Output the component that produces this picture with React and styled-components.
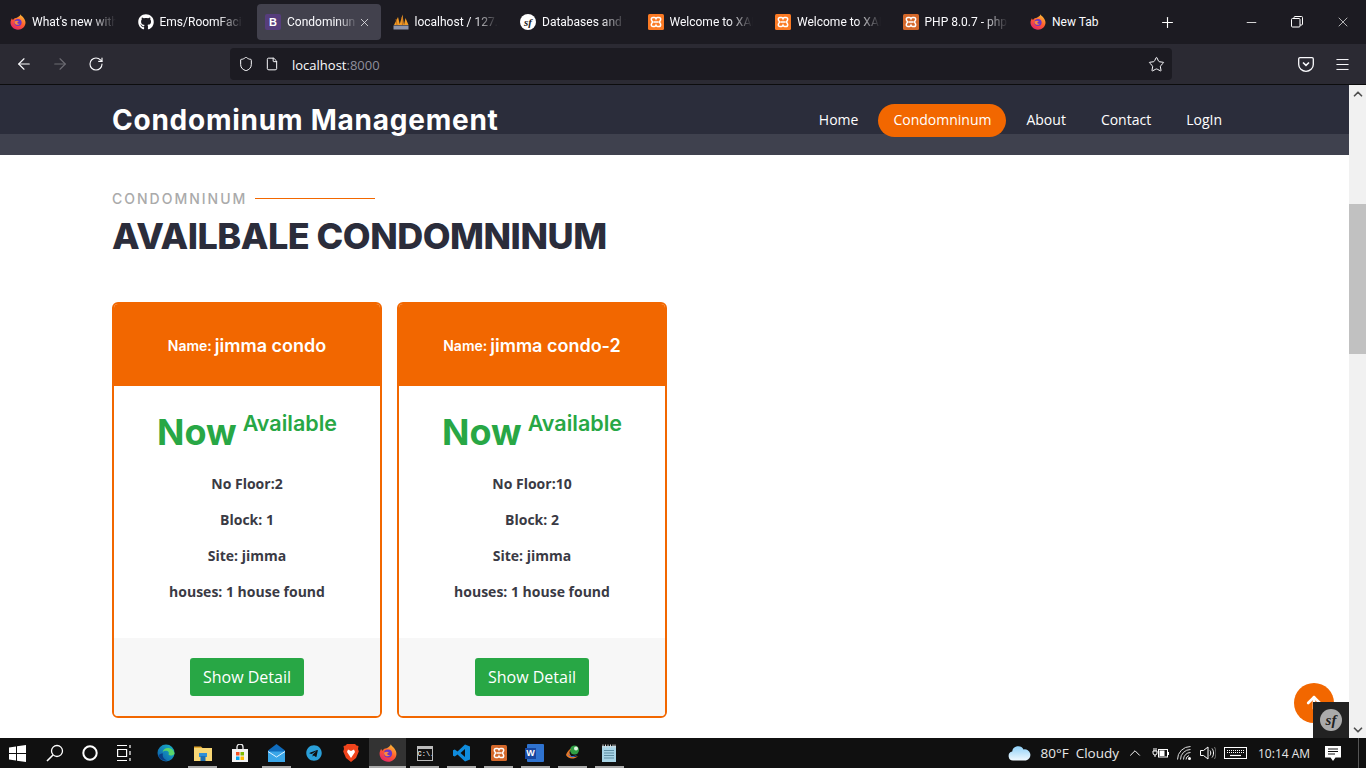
import React from "react";
import styled, { createGlobalStyle } from "styled-components";
import { ArrowLeft, ArrowRight, RotateCw, Shield, File, Star, Menu, Plus, Minus, X, ChevronUp, ChevronDown, ArrowUp } from "lucide-react";
import { FaGithub, FaTelegram } from "react-icons/fa";

const GlobalStyle = createGlobalStyle`
  html, body { margin: 0; padding: 0; height: 100%; overflow: hidden; background: #fff; }
  * { box-sizing: border-box; }
  body { font-family: "Open Sans", sans-serif; }
`;

const Screen = styled.div`
  width: 1366px;
  height: 768px;
  display: flex;
  flex-direction: column;
  overflow: hidden;
`;

const TabStrip = styled.div`
  height: 44px;
  display: flex;
  align-items: center;
  background: #1c1b22;
`;

const Tab = styled.div`
  width: 127.5px;
  height: 36px;
  padding: 0 2px;
`;

const TabInner = styled.div`
  height: 100%;
  display: flex;
  align-items: center;
  padding: 0 10px 0 8px;
  border-radius: 4px;
  background: ${(p) => (p.$active ? "#42414d" : "transparent")};
`;

const TabIcon = styled.span`
  width: 16px;
  height: 16px;
  flex: none;
  display: flex;
  margin-right: 6px;
`;

const TabLabel = styled.span`
  flex: 1;
  min-width: 0;
  overflow: hidden;
  white-space: nowrap;
  font-family: "Roboto", sans-serif;
  font-size: 12px;
  color: #fbfbfe;
  ${(p) => !p.$plain && "mask-image: linear-gradient(to right, #000 70%, transparent 100%);"}
`;

const BootstrapMark = styled.span`
  width: 16px;
  height: 16px;
  border-radius: 2px;
  background: #563d7c;
  color: #fff;
  font: 700 11px/16px "Liberation Sans", sans-serif;
  text-align: center;
`;

const SfBadge = styled.span`
  width: ${(p) => p.$size}px;
  height: ${(p) => p.$size}px;
  border-radius: 50%;
  background: ${(p) => p.$bg};
  color: ${(p) => p.$fg};
  font: italic 700 ${(p) => Math.round(p.$size * 0.68)}px/${(p) => p.$size}px "Liberation Serif", serif;
  text-align: center;
  display: block;
`;

const NewTabButton = styled.div`
  width: 40px;
  display: flex;
  justify-content: center;
`;

const Spacer = styled.div`
  flex: 1;
`;

const WinButton = styled.div`
  width: 46px;
  display: flex;
  justify-content: center;
`;

const Toolbar = styled.div`
  height: 41px;
  padding: 4px 6px 4px;
  display: flex;
  align-items: center;
  background: #2b2a33;
  border-bottom: 1px solid #0c0c0d;
`;

const ToolButton = styled.div`
  width: 36px;
  display: flex;
  justify-content: center;
  margin-left: ${(p) => (p.$first ? "116px" : "0")};
`;

const UrlBar = styled.div`
  width: 942px;
  height: 32px;
  margin-left: 116px;
  padding: 0 7px 0 8px;
  display: flex;
  align-items: center;
  border-radius: 4px;
  background: #1c1b22;
`;

const UrlIcon = styled.span`
  width: 27px;
  flex: none;
  display: flex;
`;

const UrlText = styled.div`
  flex: 1;
  padding-top: 1px;
  font-size: 13px;
  color: #fbfbfe;
`;

const UrlPort = styled.span`
  color: #8f8f9d;
`;

const Viewport = styled.div`
  position: relative;
  flex: 1;
  min-height: 0;
  display: flex;
  overflow: hidden;
`;

const Page = styled.div`
  flex: 1;
  min-width: 0;
  background: #fff;
`;

const Header = styled.header`
  height: 70px;
  padding: 19px 109.5px 0 112px;
  display: flex;
  justify-content: space-between;
  align-items: flex-start;
  background: linear-gradient(#2b2d3b 49px, #3f414e 49px);
`;

const Brand = styled.div`
  font-family: "Inter", sans-serif;
  font-weight: 700;
  font-size: 28px;
  letter-spacing: 0.76px;
  line-height: 32px;
  color: #fff;
`;

const Nav = styled.nav`
  display: flex;
  align-items: center;
`;

const NavLink = styled.a`
  height: 33px;
  padding: 0 ${(p) => (p.$active ? "15px" : "17.5px")} 2px;
  margin: 0 ${(p) => (p.$active ? "2.5px" : "0")};
  display: flex;
  align-items: center;
  border-radius: 17px;
  font-size: 14px;
  color: #fff;
  background: ${(p) => (p.$active ? "#f26700" : "transparent")};
`;

const Section = styled.section`
  padding: 33px 0 0 112px;
`;

const Eyebrow = styled.div`
  height: 20px;
  display: flex;
  align-items: center;
  gap: 8px;
`;

const EyebrowText = styled.span`
  font-family: "Inter", sans-serif;
  font-weight: 500;
  font-size: 14px;
  letter-spacing: 2px;
  color: #aaa;
`;

const EyebrowLine = styled.span`
  width: 120px;
  height: 1px;
  background: #f26700;
`;

const Heading = styled.h1`
  margin: 5px 0 0;
  font-family: "Inter", sans-serif;
  font-weight: 800;
  font-size: 36px;
  letter-spacing: -0.5px;
  line-height: 46px;
  color: #2b2d3b;
`;

const CardRow = styled.div`
  margin-top: 43px;
  display: flex;
  gap: 15px;
`;

const Card = styled.article`
  width: 270px;
  height: 416px;
  display: flex;
  flex-direction: column;
  border: 2px solid #f26700;
  border-radius: 6px;
  overflow: hidden;
  background: #fff;
`;

const CardHead = styled.div`
  height: 82px;
  flex: none;
  display: flex;
  align-items: center;
  justify-content: center;
  gap: 3px;
  background: #f26700;
  color: #fff;
`;

const NameLabel = styled.span`
  font-family: "Inter", sans-serif;
  font-weight: 600;
  font-size: 14px;
`;

const NameValue = styled.span`
  font-family: "Inter", sans-serif;
  font-weight: 600;
  font-size: 18px;
`;

const CardBody = styled.div`
  flex: 1;
  padding-top: 22px;
  display: flex;
  flex-direction: column;
  align-items: center;
`;

const Status = styled.div`
  display: flex;
  gap: 6px;
  color: #28a745;
  font-family: "Inter", sans-serif;
  font-weight: 700;
`;

const StatusNow = styled.span`
  font-size: 36px;
  line-height: 48px;
`;

const StatusWord = styled.span`
  font-size: 21.5px;
  font-weight: 600;
  line-height: 30px;
`;

const Facts = styled.div`
  margin-top: 18px;
  display: grid;
  row-gap: 16px;
  justify-items: center;
`;

const Fact = styled.p`
  margin: 0;
  font-size: 14px;
  line-height: 20px;
  font-weight: 700;
  color: #3a3a44;
`;

const CardFoot = styled.div`
  height: 78px;
  flex: none;
  padding-top: 20px;
  display: flex;
  justify-content: center;
  background: #f7f7f7;
`;

const DetailButton = styled.button`
  width: 114px;
  height: 38px;
  padding: 0;
  border: 0;
  border-radius: 3px;
  background: #28a745;
  color: #fff;
  font: 400 16px "Open Sans", sans-serif;
`;

const Scrollbar = styled.div`
  width: 17px;
  flex: none;
  display: flex;
  flex-direction: column;
  background: #f1f1f1;
`;

const ScrollArrow = styled.div`
  height: 17px;
  display: flex;
  align-items: center;
  justify-content: center;
`;

const ScrollTrack = styled.div`
  flex: 1;
  padding-top: 102px;
`;

const ScrollThumb = styled.div`
  height: 150px;
  background: #c1c1c1;
`;

const BackToTop = styled.div`
  position: absolute;
  left: 1294px;
  top: 598px;
  width: 40px;
  height: 40px;
  border-radius: 50%;
  display: flex;
  align-items: center;
  justify-content: center;
  background: #f26700;
`;

const DebugBar = styled.div`
  position: absolute;
  left: 1313px;
  bottom: 0;
  width: 36px;
  height: 36px;
  display: flex;
  align-items: center;
  justify-content: center;
  background: #222;
`;

const Taskbar = styled.footer`
  height: 30px;
  display: flex;
  align-items: stretch;
  background: #101010;
`;

const StartSlot = styled.div`
  width: 37px;
  padding-right: 3px;
  display: flex;
  align-items: center;
  justify-content: center;
`;

const SystemSlot = styled.div`
  width: 35px;
  display: flex;
  align-items: center;
  justify-content: center;
`;

const DockGap = styled.div`
  width: 5px;
`;

const DockSlot = styled.div`
  position: relative;
  width: 37px;
  display: flex;
  align-items: center;
  justify-content: center;
  background: ${(p) => (p.$active ? "#333" : "transparent")};
  ${(p) =>
    p.$running &&
    `&::after {
      content: "";
      position: absolute;
      left: ${p.$active ? 0 : 4}px;
      right: ${p.$active ? 0 : 4}px;
      bottom: 0;
      height: 2px;
      background: #aaa;
    }`}
`;

const CmdBox = styled.span`
  width: 16px;
  height: 15px;
  border: 1px solid #bbb;
  border-top-width: 3px;
  background: #111;
  color: #ddd;
  font: 700 7px/10px "Liberation Mono", monospace;
  text-align: left;
  overflow: hidden;
`;

const WordFrame = styled.span`
  position: relative;
  width: 17px;
  height: 18px;
  background: #2f73d0;
  border-radius: 1px;
`;

const WordBadge = styled.span`
  position: absolute;
  left: -2px;
  top: 4px;
  width: 11px;
  height: 11px;
  background: #17469e;
  color: #fff;
  font: 700 9px/11px "Liberation Sans", sans-serif;
  text-align: center;
`;

const Weather = styled.div`
  display: flex;
  align-items: center;
`;

const TrayText = styled.span`
  margin-left: ${(p) => p.$left}px;
  font: 400 13.5px "Open Sans", sans-serif;
  color: #e8e8e8;
`;

const TrayIcons = styled.div`
  margin-left: 7px;
  display: flex;
  align-items: center;
  gap: 8px;
`;

const Clock = styled.div`
  width: 58px;
  margin-left: 11px;
  display: flex;
  align-items: center;
  font-size: 12px;
  color: #e8e8e8;
`;

const Notification = styled.div`
  width: 34px;
  display: flex;
  align-items: center;
  justify-content: center;
`;

const ShowDesktop = styled.div`
  width: 8px;
  border-left: 1px solid #555;
  margin-left: 8px;
`;

const Firefox = ({ id, size = 16 }) => (
  <svg width={size} height={size} viewBox="0 0 16 16">
    <defs>
      <linearGradient id={id} x1="0.8" y1="0" x2="0.2" y2="1">
        <stop offset="0" stopColor="#ffc436" />
        <stop offset="0.5" stopColor="#ff5b2e" />
        <stop offset="1" stopColor="#e3206e" />
      </linearGradient>
    </defs>
    <path d="M10.5 0.3c.3 1.5 2 2 3.2 3.7 1.2 1.7 1.9 3.4 1.8 5-.2 3.7-3.4 6.7-7.5 6.7C3.8 15.7.5 12.5.5 8.6.5 6.8 1.3 5.2 2 4.2c.2 1 .6 1.4 1 1.8.8-1.5 2.6-2.2 3.8-2.2C8.4 2.9 10.3 2 10.5.3z" fill={`url(#${id})`} />
    <circle cx="8" cy="8.5" r="3.6" fill="#6a35c9" />
    <path d="M4.5 7.5c1.6-1 3.4-.8 4.7-.2-1.2.2-1.8.8-1.8 1.5 0 1 1.4 1.3 2.7.8-.9 1.2-3 1.7-4.3.8-1-.6-1.4-1.8-1.3-2.9z" fill="#ff8a3c" />
  </svg>
);

const Xampp = ({ size = 16, dim }) => (
  <svg width={size} height={size} viewBox="0 0 16 16">
    <rect width="16" height="16" rx="1.5" fill={dim ? "#d4682a" : "#fb7a24"} />
    <path d="M5 3.5h1.5c.9 0 1.3.8 1.5 1.3.2-.5.6-1.3 1.5-1.3H11c1 0 1.7.8 1.7 1.8 0 1-.7 1.7-1.4 2.7.7 1 1.4 1.7 1.4 2.7 0 1-.7 1.8-1.7 1.8H9.5c-.9 0-1.3-.8-1.5-1.3-.2.5-.6 1.3-1.5 1.3H5c-1 0-1.7-.8-1.7-1.8 0-1 .7-1.7 1.4-2.7C4 7 3.3 6.3 3.3 5.3c0-1 .7-1.8 1.7-1.8z" fill="none" stroke="#fff" strokeWidth="1.5" />
    <path d="M5.5 8h5" stroke="#fff" strokeWidth="1.5" />
  </svg>
);

const Pma = () => (
  <svg width="16" height="16" viewBox="0 0 16 16">
    <path d="M1 11 5 3l2 8zM6.5 11 9.5 0.5 11 11zM11 11l1.5-7 3 7z" fill="#f29b24" />
    <path d="M3 5 4 11M9 3l.5 8" stroke="#b5651d" strokeWidth=".8" />
    <rect x="0.5" y="11.5" width="15" height="4" fill="#8d93a8" />
  </svg>
);

const Sf = ({ size = 16, bg = "#fff", fg = "#1c1b22" }) => (
  <SfBadge $size={size} $bg={bg} $fg={fg}>sf</SfBadge>
);

const tabs = [
  { key: "ff", icon: <Firefox id="ff1" />, label: "What's new with" },
  { key: "gh", icon: <FaGithub size={16} color="#fff" />, label: "Ems/RoomFacili" },
  { key: "bs", icon: <BootstrapMark>B</BootstrapMark>, label: "Condominun", active: true },
  { key: "pma", icon: <Pma />, label: "localhost / 127.0" },
  { key: "sf", icon: <Sf />, label: "Databases and th" },
  { key: "x1", icon: <Xampp />, label: "Welcome to XAI" },
  { key: "x2", icon: <Xampp />, label: "Welcome to XAI" },
  { key: "php", icon: <Xampp dim />, label: "PHP 8.0.7 - phpi" },
  { key: "new", icon: <Firefox id="ff2" />, label: "New Tab", plain: true },
];

const units = [
  { id: 1, name: "jimma condo", floors: 2, block: 1, site: "jimma" },
  { id: 2, name: "jimma condo-2", floors: 10, block: 2, site: "jimma" },
];

const dockIcons = [
  {
    key: "edge", node: (
      <svg width="18" height="18" viewBox="0 0 18 18">
        <defs>
          <linearGradient id="edgeG" x1="0" y1="1" x2="1" y2="0">
            <stop offset="0" stopColor="#0b56a8" />
            <stop offset="1" stopColor="#1bb6c9" />
          </linearGradient>
        </defs>
        <circle cx="9" cy="9" r="8.5" fill="url(#edgeG)" />
        <path d="M17.5 10c-.2-4-3.5-6-6.5-6-3 0-5 2-5.3 4 1-1 2.5-1.5 4-1.2 2 .4 2.5 1.7 2 3-.4.9.5 1.7 2 1.7 1.5 0 3.5-.7 3.8-1.5z" fill="#5bd66a" />
        <path d="M6 9.5c-1 2.5.5 6 4.5 7-4 .8-8-1.5-9-5C2.5 10 4.5 9.5 6 9.5z" fill="#0a3f86" />
      </svg>
    ),
  },
  {
    key: "files", running: true, node: (
      <svg width="18" height="16" viewBox="0 0 18 16">
        <path d="M0 1.5h7l2 2H0z" fill="#e2a72e" />
        <rect y="3" width="18" height="13" fill="#f8d775" />
        <rect x="5" y="8" width="8" height="4" fill="#2f8fd8" />
        <rect x="6.5" y="11" width="5" height="5" fill="#1f6fb2" />
      </svg>
    ),
  },
  {
    key: "store", node: (
      <svg width="16" height="18" viewBox="0 0 16 18">
        <path d="M5 5V3a3 3 0 0 1 6 0v2" fill="none" stroke="#eee" strokeWidth="1.3" />
        <rect y="5" width="16" height="13" fill="#f3f3f3" />
        <rect x="4" y="8" width="3.5" height="3.5" fill="#f25022" />
        <rect x="8.5" y="8" width="3.5" height="3.5" fill="#7fba00" />
        <rect x="4" y="12.5" width="3.5" height="3.5" fill="#00a4ef" />
        <rect x="8.5" y="12.5" width="3.5" height="3.5" fill="#ffb900" />
      </svg>
    ),
  },
  {
    key: "mail", running: true, node: (
      <svg width="17" height="18" viewBox="0 0 17 18">
        <path d="M0 6.5 8.5 0 17 6.5V18H0z" fill="#0f6cbd" />
        <path d="M0 7.5h17V18H0z" fill="#3aa6e8" />
        <path d="M0 7.5 8.5 13 17 7.5" fill="none" stroke="#dff2ff" strokeWidth="1" />
      </svg>
    ),
  },
  { key: "tg", node: <FaTelegram size={16} color="#2a9fd8" /> },
  {
    key: "brave", node: (
      <svg width="16" height="18" viewBox="0 0 16 18">
        <path d="M4 0h8l1.5 1.5L15.5 2 15 5l.8 2.5L13 14l-5 4-5-4L.2 7.5 1 5 .5 2l2-.5z" fill="#f0441c" />
        <path d="M5 5.5 8 7l3-1.5L12 8l-2 3-2 3-2-3-2-3z" fill="#fff" />
      </svg>
    ),
  },
  { key: "fox", running: true, active: true, node: <Firefox id="ff3" size={18} /> },
  { key: "cmd", running: true, node: <CmdBox>C:\.</CmdBox> },
  {
    key: "vs", running: true, node: (
      <svg width="17" height="18" viewBox="0 0 17 18">
        <path d="M12 0.5 17 2.5V15.5L12 17.5 4.5 10.5 1.8 12.6 0 11.7V6.3L1.8 5.4 4.5 7.5zM12 5 7.5 9l4.5 4z" fill="#0f8bdc" fillRule="evenodd" />
      </svg>
    ),
  },
  { key: "xa", running: true, node: <Xampp size={16} dim /> },
  {
    key: "word", running: true, node: (
      <WordFrame>
        <WordBadge>W</WordBadge>
      </WordFrame>
    ),
  },
  {
    key: "iso", running: true, node: (
      <svg width="18" height="18" viewBox="0 0 18 18">
        <circle cx="10.5" cy="6" r="4.5" fill="#2f9e44" />
        <circle cx="12" cy="4.5" r="2" fill="#dff5e0" />
        <path d="M2 11c2-5 4-6 5-6-2 2-2 5 0 7 2 1.5 5 1 7 0-4 4-10 3-12-1z" fill="#e6792b" />
        <path d="M4 10c2 2 5 3 9 1-3 3-7 3-9-1z" fill="#2b63c4" />
      </svg>
    ),
  },
  {
    key: "pad", running: true, node: (
      <svg width="15" height="18" viewBox="0 0 15 18">
        <rect y="2" width="14" height="16" fill="#a8d4e6" />
        <path d="M1 0.5v3M3.5 0.5v3M6 0.5v3M8.5 0.5v3M11 0.5v3M13 0.5v3" stroke="#ddd" strokeWidth="1" />
        <path d="M2 6.5h10M2 9h10M2 11.5h10M2 14h10" stroke="#5f8ea3" strokeWidth="1" />
      </svg>
    ),
  },
];

export default function App() {
  return (
    <>
      <GlobalStyle />
      <Screen>
        <TabStrip>
          {tabs.map((t) => (
            <Tab key={t.key}>
              <TabInner $active={t.active}>
                <TabIcon>{t.icon}</TabIcon>
                <TabLabel $plain={t.plain}>{t.label}</TabLabel>
                {t.active && <X size={13} color="#e8e8ea" strokeWidth={1.5} />}
              </TabInner>
            </Tab>
          ))}
          <NewTabButton><Plus size={17} color="#fff" strokeWidth={1.6} /></NewTabButton>
          <Spacer />
          <WinButton><Minus size={15} color="#fff" strokeWidth={1.3} /></WinButton>
          <WinButton>
            <svg width="12" height="12" viewBox="0 0 12 12" fill="none" stroke="#fff">
              <rect x="0.5" y="2.5" width="8.5" height="8.5" rx="1" />
              <path d="M3 2.5V1.5a1 1 0 0 1 1-1h6.5a1 1 0 0 1 1 1V8a1 1 0 0 1-1 1H9" />
            </svg>
          </WinButton>
          <WinButton><X size={16} color="#fff" strokeWidth={1} /></WinButton>
        </TabStrip>

        <Toolbar>
          <ToolButton><ArrowLeft size={18} color="#fbfbfe" strokeWidth={1.5} /></ToolButton>
          <ToolButton><ArrowRight size={18} color="#6d6c73" strokeWidth={1.5} /></ToolButton>
          <ToolButton><RotateCw size={16} color="#fbfbfe" strokeWidth={1.7} /></ToolButton>
          <UrlBar>
            <UrlIcon><Shield size={16} color="#fbfbfe" strokeWidth={1.5} /></UrlIcon>
            <UrlIcon><File size={14} color="#fbfbfe" strokeWidth={1.7} /></UrlIcon>
            <UrlText>localhost<UrlPort>:8000</UrlPort></UrlText>
            <Star size={17} color="#fbfbfe" strokeWidth={1.4} />
          </UrlBar>
          <ToolButton $first>
            <svg width="16" height="15" viewBox="0 0 16 15" fill="none" stroke="#fbfbfe" strokeWidth="1.3">
              <path d="M2 .7h12a1.3 1.3 0 0 1 1.3 1.3v5.5a7.3 6.8 0 0 1-14.6 0V2A1.3 1.3 0 0 1 2 .7z" />
              <path d="M5 5.5 8 8.3l3-2.8" strokeWidth="1.6" />
            </svg>
          </ToolButton>
          <ToolButton><Menu size={17} color="#fbfbfe" strokeWidth={1.4} /></ToolButton>
        </Toolbar>

        <Viewport>
          <Page>
            <Header>
              <Brand>Condominum Management</Brand>
              <Nav>
                <NavLink>Home</NavLink>
                <NavLink $active>Condomninum</NavLink>
                <NavLink>About</NavLink>
                <NavLink>Contact</NavLink>
                <NavLink>LogIn</NavLink>
              </Nav>
            </Header>
            <Section>
              <Eyebrow>
                <EyebrowText>CONDOMNINUM</EyebrowText>
                <EyebrowLine />
              </Eyebrow>
              <Heading>AVAILBALE CONDOMNINUM</Heading>
              <CardRow>
                {units.map((u) => (
                  <Card key={u.id}>
                    <CardHead>
                      <NameLabel>Name:</NameLabel>
                      <NameValue>{u.name}</NameValue>
                    </CardHead>
                    <CardBody>
                      <Status>
                        <StatusNow>Now</StatusNow>
                        <StatusWord>Available</StatusWord>
                      </Status>
                      <Facts>
                        <Fact>No Floor:{u.floors}</Fact>
                        <Fact>Block: {u.block}</Fact>
                        <Fact>Site: {u.site}</Fact>
                        <Fact>houses: 1 house found</Fact>
                      </Facts>
                    </CardBody>
                    <CardFoot>
                      <DetailButton>Show Detail</DetailButton>
                    </CardFoot>
                  </Card>
                ))}
              </CardRow>
            </Section>
          </Page>
          <Scrollbar>
            <ScrollArrow><ChevronUp size={14} color="#505050" strokeWidth={3} /></ScrollArrow>
            <ScrollTrack><ScrollThumb /></ScrollTrack>
            <ScrollArrow><ChevronDown size={14} color="#505050" strokeWidth={3} /></ScrollArrow>
          </Scrollbar>
          <BackToTop><ArrowUp size={20} color="#fff" strokeWidth={3.2} /></BackToTop>
          <DebugBar><Sf size={22} bg="#aaa" fg="#222" /></DebugBar>
        </Viewport>

        <Taskbar>
          <StartSlot>
            <svg width="17" height="17" viewBox="0 0 17 17" fill="#fff">
              <path d="M0 2.5 7 1.5V8H0zM8 1.3 17 0V8H8zM0 9h7v6.5L0 14.5zM8 9h9v8l-9-1.3z" />
            </svg>
          </StartSlot>
          <SystemSlot>
            <svg width="18" height="18" viewBox="0 0 18 18" fill="none" stroke="#fff" strokeWidth="1.3">
              <circle cx="11" cy="7" r="5.5" />
              <path d="M7 11 1 17" strokeWidth="1.6" />
            </svg>
          </SystemSlot>
          <SystemSlot>
            <svg width="16" height="16" viewBox="0 0 16 16" fill="none" stroke="#fff" strokeWidth="2">
              <circle cx="8" cy="8" r="6.7" />
            </svg>
          </SystemSlot>
          <SystemSlot>
            <svg width="16" height="18" viewBox="0 0 16 18" fill="none" stroke="#fff" strokeWidth="1.2">
              <path d="M0 1.5h10M0 16.5h10M.6 5.5h9v7h-9zM13 1v3M13 7v4M13 14v3" />
            </svg>
          </SystemSlot>
          <DockGap />
          {dockIcons.map((d) => (
            <DockSlot key={d.key} $active={d.active} $running={d.running}>{d.node}</DockSlot>
          ))}
          <Spacer />
          <Weather>
            <svg width="23" height="16" viewBox="0 0 23 16">
              <defs>
                <linearGradient id="cloudG" x1="0" y1="0" x2="0" y2="1">
                  <stop offset="0" stopColor="#8fd0f7" />
                  <stop offset="1" stopColor="#f0f9ff" />
                </linearGradient>
              </defs>
              <path d="M5 15.5a4.5 4.5 0 0 1-.8-8.9A6 6 0 0 1 15.5 4.5a5.5 5.5 0 0 1 2.5 11z" fill="url(#cloudG)" />
            </svg>
            <TrayText $left={9}>80°F</TrayText>
            <TrayText $left={7}>Cloudy</TrayText>
          </Weather>
          <TrayIcons>
            <ChevronUp size={18} color="#fff" strokeWidth={1.3} />
            <svg width="17" height="12" viewBox="0 0 17 12" fill="none" stroke="#fff">
              <path d="M1 4h4v2a2 2 0 0 1-4 0zM2 4V1M4 4V1M3 8v2" />
              <rect x="6.5" y="2.5" width="9" height="7.5" />
              <rect x="7.5" y="3.5" width="5" height="5.5" fill="#fff" stroke="none" />
              <path d="M16.5 5v3" />
            </svg>
            <svg width="15" height="14" viewBox="0 0 15 14" fill="none" stroke="#ddd" strokeWidth="1">
              <path d="M.5 13.5A13 13 0 0 1 13.5.5M3.5 13.5A10 10 0 0 1 13.5 3.5M6.5 13.5A7 7 0 0 1 13.5 6.5M9 13.5A4.5 4.5 0 0 1 12 9.5" />
              <circle cx="12.5" cy="12.5" r="1.5" fill="#fff" stroke="none" />
            </svg>
            <svg width="16" height="14" viewBox="0 0 16 14" fill="none" stroke="#fff" strokeWidth="1">
              <path d="M.5 4.5h3L8 1v12L3.5 9.5h-3z" />
              <path d="M10 4.5c1 1.5 1 3.5 0 5M12 2.5c2 2.5 2 6.5 0 9" />
              <path d="M14.5 1c2 3 2 9 0 12" stroke="#777" />
            </svg>
            <svg width="23" height="12" viewBox="0 0 23 12" fill="none" stroke="#fff">
              <rect x="0.5" y="0.5" width="22" height="11" />
              <path d="M3 3.5h17M3 5.5h17" strokeDasharray="1 1" />
              <path d="M6 8.5h11" strokeWidth="1.2" />
            </svg>
          </TrayIcons>
          <Clock>10:14 AM</Clock>
          <Notification>
            <svg width="16" height="15" viewBox="0 0 16 15" fill="#fff">
              <path d="M0 0h16v11.5h-5.5L8 15l-2.5-3.5H0z" />
              <path d="M3 3h10M3 5.5h10M3 8h7" stroke="#101010" />
            </svg>
          </Notification>
          <ShowDesktop />
        </Taskbar>
      </Screen>
    </>
  );
}
